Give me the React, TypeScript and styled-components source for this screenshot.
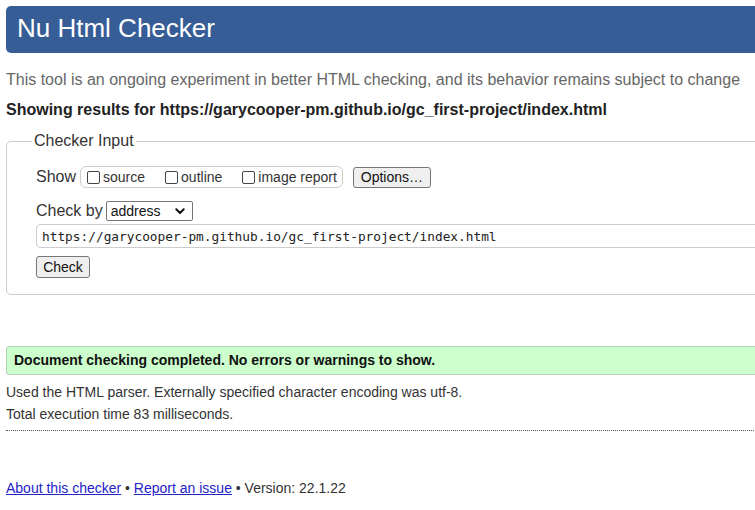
import React from 'react'
import styled, { createGlobalStyle } from 'styled-components'

const GlobalStyle = createGlobalStyle`
  html, body {
    margin: 0;
    padding: 0;
    background: #fff;
    overflow: hidden;
  }
  body {
    font-family: "Liberation Sans", Arial, sans-serif;
    color: #222;
  }
`

const URL = 'https://garycooper-pm.github.io/gc_first-project/index.html'

const App = () => {
  return (
    <>
      <GlobalStyle />
      <Page>
        <Title>Nu Html Checker</Title>
        <Intro>
          This tool is an ongoing experiment in better HTML checking, and its behavior remains
          subject to change
        </Intro>
        <Showing>Showing results for {URL}</Showing>

        <Fieldset>
          <Legend>Checker Input</Legend>
          <Row>
            <FieldLabel>Show</FieldLabel>
            <CheckGroup>
              <CheckItem>
                <Check type="checkbox" />
                source
              </CheckItem>
              <CheckItem>
                <Check type="checkbox" />
                outline
              </CheckItem>
              <CheckItem>
                <Check type="checkbox" />
                image report
              </CheckItem>
            </CheckGroup>
            <OptionsButton type="button">Options…</OptionsButton>
          </Row>
          <Row $gap={12}>
            <FieldLabel>Check by</FieldLabel>
            <SelectWrap>
              <Select defaultValue="address">
                <option value="address">address</option>
                <option value="file">file upload</option>
                <option value="text">text input</option>
              </Select>
              <Chevron />
            </SelectWrap>
          </Row>
          <UrlInput type="url" readOnly value={URL} />
          <SubmitButton type="button">Check</SubmitButton>
        </Fieldset>

        <Success>Document checking completed. No errors or warnings to show.</Success>
        <Info $first>
          Used the HTML parser. Externally specified character encoding was utf-8.
        </Info>
        <Info>Total execution time 83 milliseconds.</Info>
        <Rule />

        <Footer>
          <Link href="#">About this checker</Link> • <Link href="#">Report an issue</Link> •
          Version: 22.1.22
        </Footer>
      </Page>
    </>
  )
}

const Chevron = () => (
  <ChevronSvg width="10" height="7" viewBox="0 0 10 7" fill="none">
    <path d="M1.3 1.3L5 5L8.7 1.3" stroke="#111" strokeWidth="2" strokeLinecap="round" strokeLinejoin="round" />
  </ChevronSvg>
)

const Page = styled.div`
  width: 1000px;
  padding: 6px 0 0 6px;
`

const Title = styled.h1`
  margin: 0;
  height: 47px;
  padding-left: 11px;
  background: #365d95;
  border-radius: 5px;
  color: #fff;
  font-size: 26px;
  font-weight: normal;
  line-height: 44px;
`

const Intro = styled.p`
  margin: 18px 0 0;
  font-size: 16px;
  line-height: 18px;
  color: #666;
  white-space: nowrap;
`

const Showing = styled.p`
  margin: 12px 0 0;
  font-size: 16px;
  font-weight: bold;
  line-height: 18px;
  color: #222;
  white-space: nowrap;
`

const Fieldset = styled.fieldset`
  margin: 13px 0 0;
  padding: 16px 0 16px 29px;
  border: 1px solid #ccc;
  border-radius: 5px;
  min-width: 0;
`

const Legend = styled.legend`
  margin-left: -4px;
  padding: 0 2px;
  font-size: 16px;
  line-height: 18px;
  color: #333;
`

const Row = styled.div<{ $gap?: number }>`
  display: flex;
  align-items: center;
  height: 22px;
  margin-top: ${p => p.$gap ?? 0}px;
`

const FieldLabel = styled.span`
  font-size: 16px;
  color: #333;
`

const CheckGroup = styled.div`
  display: flex;
  align-items: center;
  box-sizing: border-box;
  height: 22px;
  margin-left: 4px;
  padding: 0 5px 0 6px;
  border: 1px solid #ccc;
  border-radius: 6px;
`

const CheckItem = styled.label`
  display: flex;
  align-items: center;
  gap: 3px;
  font-size: 14px;
  color: #333;

  & + & {
    margin-left: 20px;
  }
`

const Check = styled.input`
  appearance: none;
  margin: 0;
  width: 13px;
  height: 13px;
  box-sizing: border-box;
  border: 1px solid #444;
  border-radius: 2px;
  background: #fff;
`

const BaseButton = styled.button`
  box-sizing: border-box;
  margin: 0;
  padding: 0;
  background: #efefef;
  border: 1px solid #767676;
  border-radius: 3px;
  font-family: "Liberation Sans", Arial, sans-serif;
  font-size: 14px;
  color: #111;
`

const OptionsButton = styled(BaseButton)`
  margin-left: 10px;
  width: 78px;
  height: 21px;
`

const SelectWrap = styled.div`
  position: relative;
  margin-left: 3px;
`

const Select = styled.select`
  appearance: none;
  display: block;
  box-sizing: border-box;
  width: 87px;
  height: 20px;
  margin: 0;
  padding: 0 0 0 4px;
  border: 1px solid #767676;
  border-radius: 2px;
  background: #fff;
  font-family: "Liberation Sans", Arial, sans-serif;
  font-size: 14px;
  color: #111;
`

const ChevronSvg = styled.svg`
  position: absolute;
  right: 8px;
  top: 7px;
  pointer-events: none;
`

const UrlInput = styled.input`
  display: block;
  box-sizing: border-box;
  width: 960px;
  height: 24px;
  margin: 2px 0 0;
  padding: 0 5px;
  border: 1px solid #ccc;
  border-radius: 4px;
  font-family: "DejaVu Sans Mono", "Liberation Mono", monospace;
  font-size: 12.8px;
  color: #222;
`

const SubmitButton = styled(BaseButton)`
  display: block;
  margin-top: 8px;
  width: 54px;
  height: 22px;
`

const Success = styled.div`
  margin-top: 51px;
  box-sizing: border-box;
  height: 29px;
  padding-left: 7px;
  background: #ccffcc;
  border: 1px solid #b8d0b8;
  border-radius: 3px;
  font-size: 14px;
  font-weight: bold;
  line-height: 27px;
  color: #111;
`

const Info = styled.p<{ $first?: boolean }>`
  margin: ${p => (p.$first ? 6 : 0)}px 0 0;
  font-size: 14px;
  line-height: 22px;
  color: #333;
`

const Rule = styled.hr`
  margin: 5px 0 0;
  border: 0;
  border-top: 1px dotted #555;
  height: 0;
`

const Footer = styled.p`
  margin: 46px 0 0;
  font-size: 14px;
  line-height: 22px;
  color: #333;
`

const Link = styled.a`
  color: #2323c8;
  text-decoration: underline;
`

export default App
